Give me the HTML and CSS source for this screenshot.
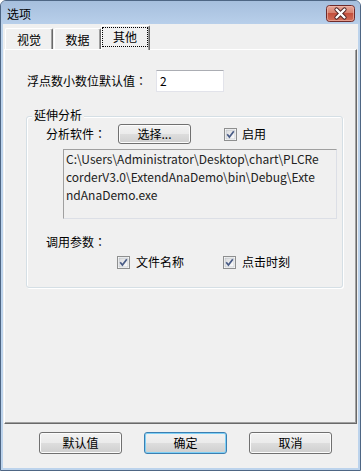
FILE: index.html
```html
<!DOCTYPE html>
<html>
<head>
<meta charset="utf-8">
<link rel="stylesheet" href="styles.css">
</head>
<body>
<div class="window">
  <div class="titlebar">
    <span class="title">选项</span>
    <span class="close">
      <svg width="29" height="17" viewBox="0 0 29 17">
        <defs>
          <linearGradient id="cg" x1="0" y1="0" x2="0" y2="1">
            <stop offset="0" stop-color="#e9a99b"/>
            <stop offset="0.45" stop-color="#d7816f"/>
            <stop offset="0.5" stop-color="#c4503d"/>
            <stop offset="1" stop-color="#d3715c"/>
          </linearGradient>
        </defs>
        <rect x="0.5" y="0.5" width="28" height="16" rx="3" fill="url(#cg)" stroke="#6e2a2a"/>
        <rect x="1.5" y="1.5" width="26" height="14" rx="2" fill="none" stroke="#f2c0b4" stroke-opacity="0.6"/>
        <path d="M10.5 4.5 L18.5 12.5 M18.5 4.5 L10.5 12.5" stroke="#4a2020" stroke-width="4.2" stroke-linecap="round"/>
        <path d="M10.5 4.5 L18.5 12.5 M18.5 4.5 L10.5 12.5" stroke="#ffffff" stroke-width="2.4" stroke-linecap="round"/>
      </svg>
    </span>
  </div>
  <div class="client">
    <div class="tabs">
      <div class="tab">视觉</div>
      <div class="tab">数据</div>
      <div class="tab active"><span class="focus">其他</span></div>
    </div>
    <div class="panel">
      <div class="row1">
        <span class="label">浮点数小数位默认值<span class="colon">：</span></span>
        <div class="input">2</div>
      </div>
      <div class="group">
        <div class="group-title">延伸分析</div>
        <div class="soft-row">
          <span class="label">分析软件<span class="colon">：</span></span>
          <div class="btn small">选择...</div>
          <span class="check check-enable">
            <svg class="cb" width="13" height="13" viewBox="0 0 13 13"><defs><linearGradient id="cb1" x1="0" y1="0" x2="1" y2="1"><stop offset="0" stop-color="#d8d9db"/><stop offset="1" stop-color="#ffffff"/></linearGradient></defs><rect x="0.5" y="0.5" width="12" height="12" fill="#fff" stroke="#8e8f8f"/><rect x="2" y="2" width="9" height="9" fill="url(#cb1)" stroke="#b3b8c0" stroke-width="0.6"/><path d="M3.2 6.2 L5.4 9 L9.8 3.2" fill="none" stroke="#4a5d87" stroke-width="1.7"/></svg>
            <span>启用</span>
          </span>
        </div>
        <div class="path">C:\Users\Administrator\Desktop\chart\PLCRe<br>corderV3.0\ExtendAnaDemo\bin\Debug\Exte<br>ndAnaDemo.exe</div>
        <div class="params-label">调用参数<span class="colon">：</span></div>
        <div class="params">
          <span class="check">
            <svg class="cb" width="13" height="13" viewBox="0 0 13 13"><defs><linearGradient id="cb2" x1="0" y1="0" x2="1" y2="1"><stop offset="0" stop-color="#d8d9db"/><stop offset="1" stop-color="#ffffff"/></linearGradient></defs><rect x="0.5" y="0.5" width="12" height="12" fill="#fff" stroke="#8e8f8f"/><rect x="2" y="2" width="9" height="9" fill="url(#cb2)" stroke="#b3b8c0" stroke-width="0.6"/><path d="M3.2 6.2 L5.4 9 L9.8 3.2" fill="none" stroke="#4a5d87" stroke-width="1.7"/></svg>
            <span>文件名称</span>
          </span>
          <span class="check check-second">
            <svg class="cb" width="13" height="13" viewBox="0 0 13 13"><defs><linearGradient id="cb3" x1="0" y1="0" x2="1" y2="1"><stop offset="0" stop-color="#d8d9db"/><stop offset="1" stop-color="#ffffff"/></linearGradient></defs><rect x="0.5" y="0.5" width="12" height="12" fill="#fff" stroke="#8e8f8f"/><rect x="2" y="2" width="9" height="9" fill="url(#cb3)" stroke="#b3b8c0" stroke-width="0.6"/><path d="M3.2 6.2 L5.4 9 L9.8 3.2" fill="none" stroke="#4a5d87" stroke-width="1.7"/></svg>
            <span>点击时刻</span>
          </span>
        </div>
      </div>
    </div>
    <div class="buttons">
      <div class="btn">默认值</div>
      <div class="btn default">确定</div>
      <div class="btn">取消</div>
    </div>
  </div>
</div>
</body>
</html>
```

FILE: styles.css
```css
* { box-sizing: border-box; }
html, body { margin: 0; padding: 0; }
body {
  width: 361px;
  height: 471px;
  overflow: hidden;
  background: #ffffff;
  font-family: "Noto Sans CJK SC", "Microsoft YaHei", sans-serif;
  font-size: 12px;
  color: #000;
}
.window {
  width: 361px;
  height: 471px;
  display: flex;
  flex-direction: column;
  background: #bcd3ec;
  border: 1px solid #4e6684;
  border-radius: 6px 6px 0 0;
  overflow: hidden;
}
.titlebar {
  height: 23px;
  flex: none;
  display: flex;
  justify-content: space-between;
  align-items: flex-start;
  padding: 0 5px 0 6px;
  background: linear-gradient(to bottom, #a6bfdd, #b8cfea);
}
.title {
  margin-top: 4px;
  font-size: 12px;
  line-height: 17px;
  color: #000;
}
.close {
  margin-top: 4px;
  display: flex;
  height: 17px;
}
.client {
  flex: 1;
  margin: 0 2px 2px 2px;
  padding: 1px 1px 0 1px;
  background: #f0f0f0;
  display: flex;
  flex-direction: column;
}
.tabs {
  height: 24px;
  flex: none;
  display: flex;
  align-items: flex-end;
  padding-left: 1px;
  position: relative;
  z-index: 2;
}
.tab {
  height: 21px;
  width: 48px;
  display: flex;
  align-items: center;
  justify-content: center;
  padding-top: 1px;
  border-top: 1px solid #ffffff;
  border-left: 1px solid #ffffff;
  border-right: 1px solid #696969;
  box-shadow: inset -1px 0 0 #a0a0a0;
  border-radius: 2px 2px 0 0;
  background: #f0f0f0;
}
.tab + .tab { margin-left: 1px; width: 47px; }
.tab.active {
  height: 25px;
  width: 49px;
  margin-left: 0;
  margin-bottom: -1px;
  padding: 1px 1px 1px 0;
  align-items: stretch;
}
.focus {
  flex: 1;
  display: flex;
  align-items: center;
  justify-content: center;
  border: 1px dotted #000;
  margin: 0 0 2px 0;
  padding-bottom: 2px;
}
.panel {
  height: 375px;
  flex: none;
  border-top: 1px solid #ffffff;
  border-left: 1px solid #ffffff;
  border-right: 1px solid #696969;
  border-bottom: 1px solid #696969;
  box-shadow: inset -1px -1px 0 #a0a0a0;
  display: flex;
  flex-direction: column;
  position: relative;
  z-index: 1;
}
.colon { font-family: "Noto Sans CJK JP", "Noto Sans CJK TC", sans-serif; }
.row1 {
  margin: 20px 0 0 22px;
  height: 22px;
  display: flex;
  align-items: center;
}
.label { line-height: 16px; }
.input {
  margin-left: 9px;
  width: 68px;
  height: 22px;
  background: #ffffff;
  border: 1px solid #e2e3ea;
  border-top-color: #abadb3;
  padding: 0 0 0 3px;
  line-height: 19px;
}
.group {
  margin: 24px 0 0 21px;
  width: 317px;
  height: 172px;
  border: 1px solid #d5dfe5;
  border-radius: 3px;
  box-shadow: inset 1px 1px 0 #ffffff, 1px 1px 0 #ffffff;
  display: flex;
  flex-direction: column;
  padding-left: 19px;
}
.group-title {
  align-self: flex-start;
  margin: -10px 0 0 -14px;
  padding: 0 2px;
  height: 16px;
  line-height: 16px;
  background: #f0f0f0;
}
.soft-row {
  margin-top: 1px;
  height: 20px;
  display: flex;
  align-items: center;
}
.btn {
  width: 83px;
  height: 22px;
  display: flex;
  align-items: center;
  justify-content: center;
  border: 1px solid #707070;
  border-radius: 3px;
  background: linear-gradient(to bottom, #f2f2f2 0%, #ebebeb 48%, #dddddd 52%, #cfcfcf 100%);
  box-shadow: inset 0 0 0 1px #fcfcfc;
  padding-bottom: 1px;
}
.btn.small {
  width: 73px;
  height: 20px;
  margin-left: 12px;
}
.btn.default {
  border-color: #3c7fb1;
  box-shadow: inset 0 0 0 1px #7fd0f6;
}
.check {
  display: flex;
  align-items: center;
  line-height: 16px;
}
.cb { flex: none; margin-right: 6px; }
.check-enable { margin-left: 33px; }
.check-enable .cb { margin-right: 5px; }
.path {
  margin: 5px 5px 0 17px;
  height: 70px;
  border: 1px solid #dcdfe6;
  border-top-color: #a0a0a0;
  border-left-color: #a0a0a0;
  padding: 0 0 0 2px;
  line-height: 18px;
  color: #222;
  white-space: nowrap;
}
.params-label {
  margin-top: 15px;
  line-height: 16px;
}
.params {
  margin: 4px 0 0 71px;
  height: 16px;
  display: flex;
  align-items: center;
}
.check-second { margin-left: 39px; }
.check-second .cb { margin-right: 6px; }
.buttons {
  margin-top: 8px;
  padding-left: 35px;
  display: flex;
  gap: 22px;
}
```
